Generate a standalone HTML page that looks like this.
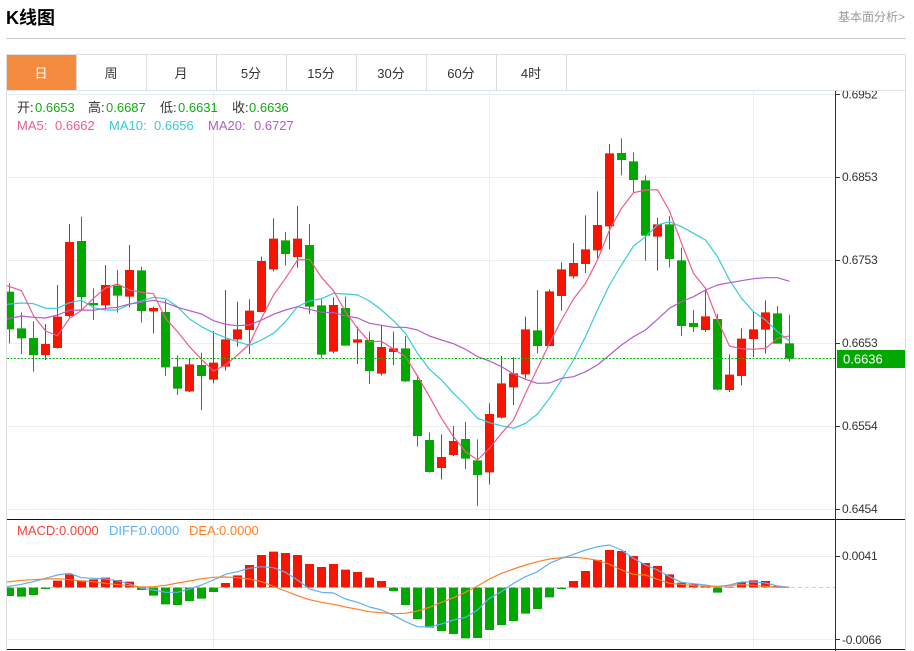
<!DOCTYPE html>
<html lang="zh">
<head>
<meta charset="utf-8">
<title>K线图</title>
<style>
html,body{margin:0;padding:0;background:#fff;width:914px;height:651px;overflow:hidden}
svg{display:block;font-family:"Liberation Sans","Noto Sans CJK SC",sans-serif}
.ma{fill:none;stroke-width:1.2;vector-effect:non-scaling-stroke;stroke-linejoin:round}
.tab{font-size:13px;fill:#333;text-anchor:middle}
.ax{font-size:12px;fill:#333;letter-spacing:-.2px}
.l{font-size:13px}
</style>
</head>
<body>
<svg width="914" height="651" viewBox="0 0 914 651" xmlns="http://www.w3.org/2000/svg">
<defs><clipPath id="axc"><rect x="836" y="91" width="70" height="560"/></clipPath></defs>
<text x="6" y="24" font-size="18" font-weight="700" fill="#000">K线图</text>
<text x="838" y="21" font-size="12" fill="#999">基本面分析&gt;</text>
<path d="M6 38.5H906" stroke="#ccc"/>

<!-- frame -->
<path d="M6.5 54.5H905.5V651M6.5 54.5V651" fill="none" stroke="#dcdfe2"/>
<rect x="7" y="55" width="69" height="35" fill="#f58b3e"/>
<path d="M7 90.5H905" stroke="#dde2e6"/>
<path d="M76.5 55V90M146.5 55V90M216.5 55V90M286.5 55V90M356.5 55V90M426.5 55V90M496.5 55V90M566.5 55V90" stroke="#dcdcdc"/>
<text class="tab" x="41" y="78" style="fill:#fff">日</text>
<text class="tab" x="111" y="78">周</text>
<text class="tab" x="181" y="78">月</text>
<text class="tab" x="251" y="78">5分</text>
<text class="tab" x="321" y="78">15分</text>
<text class="tab" x="391" y="78">30分</text>
<text class="tab" x="461" y="78">60分</text>
<text class="tab" x="531" y="78">4时</text>

<!-- grid -->
<path d="M7 94.5H835M7 177.5H835M7 260.5H835M7 343.5H835M7 426.5H835M7 509.5H835M7 556.5H835M7 639.5H835M213.5 91V650M489.5 91V650M753.5 91V650" stroke="#e6edf3"/>

<!-- candles section A -->
<g transform="translate(0,200) scale(1,.33333)">
<path fill="none" stroke="#f51500" d="M45.5 372V480M57.5 255V446M69.5 72V352M105.5 195V330M129.5 135V322M153.5 320V400M189.5 476V576M213.5 393V550M225.5 270V512M237.5 305V440M249.5 298V462M261.5 170V336M273.5 55V214M297.5 18V203M333.5 292V460M357.5 380V492M381.5 376V527M393.5 395V495M441.5 703V838M453.5 678V768M489.5 610V853M501.5 468V655M513.5 472V615M525.5 350V535M549.5 268V438M561.5 187V332M573.5 129V236M585.5 46V219"/>
<path fill="none" stroke="#00a800" d="M9.5 250V430M21.5 337V462M33.5 364V515M81.5 50V330M93.5 265V360M117.5 210V338M141.5 200V368M165.5 300V528M177.5 466V585M201.5 458V630M285.5 96V197M309.5 72V342M321.5 298V475M345.5 290V437M369.5 395V552M405.5 408V546M417.5 525V740M429.5 697V818M465.5 666V807M477.5 718V918M537.5 270V460"/>
<path fill="#f51500" d="M41 432h9V465h-9zM53 350h9V444h-9zM65 126h9V348h-9zM101 255h9V316h-9zM125 210h9V290h-9zM149 324h9V334h-9zM185 493h9V574h-9zM209 488h9V539h-9zM221 418h9V500h-9zM233 388h9V418h-9zM245 332h9V390h-9zM257 183h9V336h-9zM269 116h9V208h-9zM293 116h9V171h-9zM329 315h9V455h-9zM353 418h9V428h-9zM377 441h9V521h-9zM389 445h9V456h-9zM437 771h9V804h-9zM449 723h9V765h-9zM485 642h9V817h-9zM497 550h9V653h-9zM509 520h9V562h-9zM521 388h9V523h-9zM545 274h9V438h-9zM557 208h9V288h-9zM569 189h9V229h-9zM581 148h9V192h-9z"/>
<path fill="#00a800" d="M7 275h7V388h-7zM17 385h9V415h-9zM29 414h9V465h-9zM77 123h9V291h-9zM89 309h9V316h-9zM113 257h9V287h-9zM137 211h9V333h-9zM161 336h9V502h-9zM173 500h9V566h-9zM197 495h9V528h-9zM281 121h9V162h-9zM305 135h9V320h-9zM317 316h9V464h-9zM341 324h9V437h-9zM365 420h9V513h-9zM401 445h9V544h-9zM413 540h9V708h-9zM425 720h9V816h-9zM461 717h9V776h-9zM473 781h9V825h-9zM533 391h9V438h-9z"/>
</g>
<!-- candles section B -->
<g transform="translate(0,120) scale(1,.33333)">
<path fill="none" stroke="#f51500" d="M597.5 214V415M609.5 72V388M657.5 293V452M705.5 502V636M729.5 703V816M741.5 625V796M753.5 576V711M765.5 541V701"/>
<path fill="none" stroke="#00a800" d="M621.5 55V166M633.5 97V218M645.5 166V422M669.5 288V442M681.5 383V648M693.5 570V636M717.5 582V811M777.5 558V671M789.5 584V725"/>
<path fill="#f51500" d="M593 315h9V391h-9zM605 100h9V319h-9zM653 313h9V350h-9zM701 589h9V630h-9zM725 764h9V810h-9zM737 656h9V768h-9zM749 628h9V657h-9zM761 577h9V629h-9z"/>
<path fill="#00a800" d="M617 99h9V120h-9zM629 124h9V180h-9zM641 181h9V347h-9zM665 313h9V417h-9zM677 421h9V618h-9zM689 609h9V621h-9zM713 597h9V809h-9zM773 580h9V671h-9zM785 670h9V716h-9z"/>
</g>

<!-- MA lines -->
<g transform="translate(0,200) scale(1,.33333)">
<polyline class="ma" stroke="#36cbdc" points="7,313 21.5,309 33.5,311 45.5,325 57.5,325 69.5,308 81.5,301 93.5,323 105.5,330 117.5,330 129.5,313 141.5,303 153.5,292 165.5,296 177.5,320 189.5,357 201.5,380 213.5,398 225.5,413 237.5,425 249.5,436 261.5,420 273.5,400 285.5,365 297.5,320 309.5,303 321.5,296 333.5,280 345.5,282 357.5,285 369.5,303 381.5,330 393.5,362 405.5,400 417.5,460 429.5,508 441.5,540 453.5,580 465.5,615 477.5,655 489.5,668 501.5,677 513.5,685 525.5,670 537.5,642 549.5,595 561.5,540 573.5,480 585.5,410 597.5,330"/>
<polyline class="ma" stroke="#b45cc9" points="7,357 21.5,348 33.5,352 45.5,354 57.5,345 69.5,331 81.5,330 93.5,331 105.5,325 117.5,322 129.5,312 141.5,307 153.5,301 165.5,308 177.5,322 189.5,332 201.5,342 213.5,362 225.5,373 237.5,377 249.5,375 261.5,360 273.5,343 285.5,330 297.5,320 309.5,328 321.5,337 333.5,338 345.5,347 357.5,354 369.5,370 381.5,376 393.5,382 405.5,382 417.5,390 429.5,408 441.5,420 453.5,431 465.5,448 477.5,470 489.5,483 501.5,500 513.5,522 525.5,538 537.5,550 549.5,549 561.5,535 573.5,530 585.5,515 597.5,495"/>
<polyline class="ma" stroke="#ef5c8a" points="7,257 21.5,272 33.5,347 45.5,393 57.5,407 69.5,355 81.5,331 93.5,295 105.5,264 117.5,252 129.5,270 141.5,277 153.5,281 165.5,355 177.5,395 189.5,440 201.5,478 213.5,513 225.5,495 237.5,465 249.5,432 261.5,355 273.5,285 285.5,235 297.5,180 309.5,178 321.5,232 333.5,272 345.5,335 357.5,385 369.5,425 381.5,424 393.5,447 405.5,470 417.5,528 429.5,590 441.5,655 453.5,710 465.5,755 477.5,780 489.5,745 501.5,700 513.5,660 525.5,580 537.5,505 549.5,430 561.5,360 573.5,297 585.5,250 597.5,180"/>
</g>
<g transform="translate(0,120) scale(1,.33333)">
<polyline class="ma" stroke="#36cbdc" points="597.5,570 609.5,495 621.5,435 633.5,378 645.5,350 657.5,315 669.5,305 681.5,320 693.5,340 705.5,360 717.5,410 729.5,480 741.5,535 753.5,575 765.5,600 777.5,635 789.5,663"/>
<polyline class="ma" stroke="#b45cc9" points="597.5,735 609.5,705 621.5,675 633.5,650 645.5,630 657.5,598 669.5,565 681.5,545 693.5,530 705.5,510 717.5,495 729.5,488 741.5,482 753.5,476 765.5,473 777.5,473 789.5,484"/>
<polyline class="ma" stroke="#ef5c8a" points="597.5,420 609.5,330 621.5,265 633.5,218 645.5,210 657.5,209 669.5,273 681.5,370 693.5,460 705.5,505 717.5,600 729.5,678 741.5,686 753.5,688 765.5,685 777.5,655 789.5,648"/>
</g>

<!-- last price -->
<path d="M7 358.5H835" stroke="#12b012" stroke-dasharray="2 1.5"/>

<!-- legends -->
<text class="l" y="112" fill="#333"><tspan x="17">开:</tspan><tspan x="88">高:</tspan><tspan x="160">低:</tspan><tspan x="232">收:</tspan></text>
<text class="l" y="112" fill="#13a913"><tspan x="35">0.6653</tspan><tspan x="106">0.6687</tspan><tspan x="178">0.6631</tspan><tspan x="249">0.6636</tspan></text>
<text class="l" y="130" fill="#ef5c8a"><tspan x="17">MA5:</tspan><tspan x="55">0.6662</tspan></text>
<text class="l" y="130" fill="#36cbdc"><tspan x="109">MA10:</tspan><tspan x="154">0.6656</tspan></text>
<text class="l" y="130" fill="#b45cc9"><tspan x="208">MA20:</tspan><tspan x="254">0.6727</tspan></text>

<!-- MACD -->
<path d="M7 587.5H835" stroke="#a8dcf0" stroke-dasharray="4 3"/>
<g transform="translate(0,515) scale(1,.33333)">
<path fill="#f51500" d="M53 197h9V217h-9zM65 178h9V217h-9zM77 196h9V217h-9zM89 193h9V217h-9zM101 188h9V217h-9zM113 195h9V217h-9zM125 200h9V217h-9zM221 204h9V217h-9zM233 181h9V217h-9zM245 150h9V217h-9zM257 120h9V217h-9zM269 110h9V217h-9zM281 114h9V217h-9zM293 120h9V217h-9zM305 147h9V217h-9zM317 156h9V217h-9zM329 147h9V217h-9zM341 164h9V217h-9zM353 171h9V217h-9zM365 188h9V217h-9zM377 198h9V217h-9zM569 198h9V217h-9zM581 168h9V217h-9zM593 135h9V217h-9zM605 105h9V217h-9zM617 108h9V217h-9zM629 123h9V217h-9zM641 144h9V217h-9zM653 153h9V217h-9zM665 178h9V217h-9zM677 203h9V217h-9zM689 208h9V217h-9zM701 214h9V217h-9zM725 215h9V217h-9zM737 201h9V217h-9zM749 196h9V217h-9zM761 198h9V217h-9zM773 213h9V217h-9z"/>
<path fill="#00a800" d="M7 218h7V243h-7zM17 218h9V245h-9zM29 218h9V240h-9zM41 218h9V222h-9zM137 218h9V225h-9zM149 218h9V242h-9zM161 218h9V268h-9zM173 218h9V270h-9zM185 218h9V258h-9zM197 218h9V251h-9zM209 218h9V231h-9zM389 218h9V228h-9zM401 218h9V270h-9zM413 218h9V312h-9zM425 218h9V338h-9zM437 218h9V348h-9zM449 218h9V357h-9zM461 218h9V370h-9zM473 218h9V369h-9zM485 218h9V345h-9zM497 218h9V330h-9zM509 218h9V318h-9zM521 218h9V296h-9zM533 218h9V282h-9zM545 218h9V247h-9zM557 218h9V222h-9zM713 218h9V233h-9z"/>
<polyline class="ma" stroke="#5eb0f2" points="7,215 21.5,208 33.5,200 45.5,190 57.5,180 69.5,175 81.5,188 93.5,190 105.5,192 117.5,197 129.5,207 141.5,220 153.5,225 165.5,232 177.5,232 189.5,222 201.5,210 213.5,195 225.5,178 237.5,170 249.5,160 261.5,155 273.5,158 285.5,172 297.5,195 309.5,222 321.5,232 333.5,234 345.5,252 357.5,262 369.5,276 381.5,285 393.5,301 405.5,320 417.5,335 429.5,336 441.5,327 453.5,315 465.5,307 477.5,285 489.5,250 501.5,230 513.5,205 525.5,185 537.5,170 549.5,145 561.5,130 573.5,118 585.5,105 597.5,95 609.5,90 621.5,105 633.5,130 645.5,150 657.5,165 669.5,185 681.5,202 693.5,206 705.5,210 717.5,216 729.5,210 741.5,201 753.5,201 765.5,204 777.5,213 789.5,217"/>
<polyline class="ma" stroke="#ff7f27" points="7,201 21.5,196 33.5,194 45.5,192 57.5,191 69.5,194 81.5,198 93.5,200 105.5,205 117.5,209 129.5,212 141.5,216 153.5,215 165.5,211 177.5,204 189.5,198 201.5,191 213.5,187 225.5,186 237.5,188 249.5,192 261.5,200 273.5,214 285.5,228 297.5,242 309.5,254 321.5,262 333.5,268 345.5,276 357.5,283 369.5,290 381.5,293 393.5,296 405.5,295 417.5,288 429.5,277 441.5,262 453.5,248 465.5,232 477.5,213 489.5,192 501.5,175 513.5,162 525.5,150 537.5,140 549.5,132 561.5,128 573.5,127 585.5,130 597.5,136 609.5,148 621.5,165 633.5,178 645.5,180 657.5,193 669.5,205 681.5,208 693.5,212 705.5,214 717.5,214 729.5,211 741.5,209 753.5,211 765.5,214 777.5,217 789.5,217"/>
</g>
<text class="l" y="535" fill="#f44336"><tspan x="17">MACD:</tspan><tspan x="59">0.0000</tspan></text>
<text class="l" y="535" fill="#5eb0f2"><tspan x="109">DIFF:</tspan><tspan x="139.500">0.0000</tspan></text>
<text class="l" y="535" fill="#ff7f27"><tspan x="189">DEA:</tspan><tspan x="219">0.0000</tspan></text>

<!-- separators, axis -->
<path d="M7 519.5H905M7 649.5H905" stroke="#111"/>
<path d="M835.500 91V651" stroke="#333"/>
<path d="M836 94.500H840M836 177.500H840M836 260.500H840M836 343.500H840M836 426.500H840M836 509.500H840M836 556.500H840M836 639.500H840" stroke="#333"/>
<g class="ax" clip-path="url(#axc)">
<text x="842" y="98.500">0.6952</text>
<text x="842" y="181">0.6853</text>
<text x="842" y="264">0.6753</text>
<text x="842" y="347">0.6653</text>
<text x="842" y="430">0.6554</text>
<text x="842" y="513">0.6454</text>
<text x="842" y="560">0.0041</text>
<text x="842" y="644">-0.0066</text>
</g>
<rect x="837" y="350" width="68" height="18" fill="#00a800"/>
<text x="843" y="363.500" font-size="13" fill="#fff">0.6636</text>
</svg>
</body>
</html>
